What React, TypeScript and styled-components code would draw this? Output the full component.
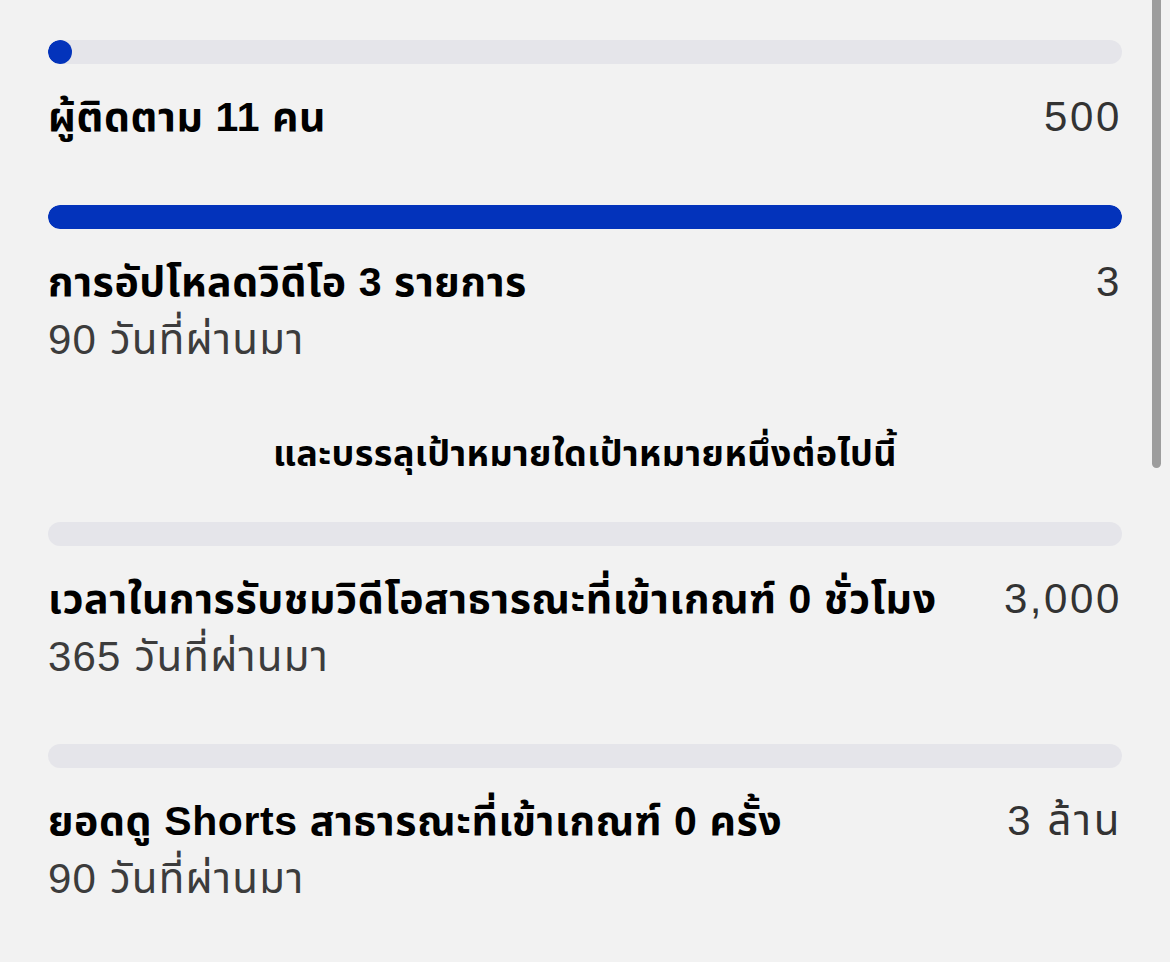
import styled, { createGlobalStyle } from 'styled-components'

const GlobalStyle = createGlobalStyle`
  html, body {
    margin: 0;
    padding: 0;
    background: #f2f2f2;
  }
  body {
    font-family: "Liberation Sans", "Noto Sans Thai", "Noto Sans", sans-serif;
    -webkit-font-smoothing: antialiased;
  }
`

const Page = styled.div`
  position: relative;
  box-sizing: border-box;
  width: 1170px;
  height: 962px;
  padding: 40px 48px 0;
  overflow: hidden;
`

const Scrollbar = styled.div`
  position: absolute;
  top: 0;
  right: 9px;
  width: 9px;
  height: 468px;
  border-radius: 0 0 5px 5px;
  background: #9d9d9d;
`

const Goal = styled.section`
  display: flex;
  flex-direction: column;
  margin-bottom: 58px;

  &:first-child {
    margin-bottom: 59px;
  }
`

const Track = styled.div`
  height: 24px;
  border-radius: 12px;
  background: #e5e5ea;
  margin-bottom: 24px;
  overflow: hidden;
`

const Fill = styled.div`
  height: 100%;
  min-width: 24px;
  border-radius: 12px;
  background: #0333bb;
`

const Row = styled.div`
  display: flex;
  align-items: flex-start;
  justify-content: space-between;
  gap: 24px;
`

const Texts = styled.div`
  display: flex;
  flex-direction: column;
`

const Title = styled.div`
  font-size: 41px;
  line-height: 58px;
  letter-spacing: 0.6px;
  font-weight: 700;
  color: #000;
`

const Sub = styled.div`
  font-size: 42px;
  line-height: 58px;
  letter-spacing: 1.2px;
  color: #3c3c3c;
`

const Value = styled.div`
  font-size: 42px;
  line-height: 58px;
  letter-spacing: 2.6px;
  color: #333;
  white-space: nowrap;
`

const Note = styled.div`
  text-align: center;
  font-size: 36px;
  line-height: 58px;
  letter-spacing: 0.4px;
  font-weight: 700;
  color: #000;
  margin: -2px 0 39px;
`

type GoalData = {
  title: string
  sub?: string
  value: string
  percent: number
}

const topGoals: GoalData[] = [
  { title: 'ผู้ติดตาม 11 คน', value: '500', percent: 0 },
  { title: 'การอัปโหลดวิดีโอ 3 รายการ', sub: '90 วันที่ผ่านมา', value: '3', percent: 100 },
]

const anyGoals: GoalData[] = [
  { title: 'เวลาในการรับชมวิดีโอสาธารณะที่เข้าเกณฑ์ 0 ชั่วโมง', sub: '365 วันที่ผ่านมา', value: '3,000', percent: 0 },
  { title: 'ยอดดู Shorts สาธารณะที่เข้าเกณฑ์ 0 ครั้ง', sub: '90 วันที่ผ่านมา', value: '3 ล้าน', percent: 0 },
]

function GoalItem({ goal, showDot }: { goal: GoalData; showDot: boolean }) {
  return (
    <Goal>
      <Track>
        {(showDot || goal.percent > 0) && <Fill style={{ width: `${goal.percent}%` }} />}
      </Track>
      <Row>
        <Texts>
          <Title>{goal.title}</Title>
          {goal.sub && <Sub>{goal.sub}</Sub>}
        </Texts>
        <Value>{goal.value}</Value>
      </Row>
    </Goal>
  )
}

export default function App() {
  return (
    <>
      <GlobalStyle />
      <Page>
        {topGoals.map((g, i) => (
          <GoalItem key={g.title} goal={g} showDot={i === 0} />
        ))}
        <Note>และบรรลุเป้าหมายใดเป้าหมายหนึ่งต่อไปนี้</Note>
        {anyGoals.map((g) => (
          <GoalItem key={g.title} goal={g} showDot={false} />
        ))}
        <Scrollbar />
      </Page>
    </>
  )
}
